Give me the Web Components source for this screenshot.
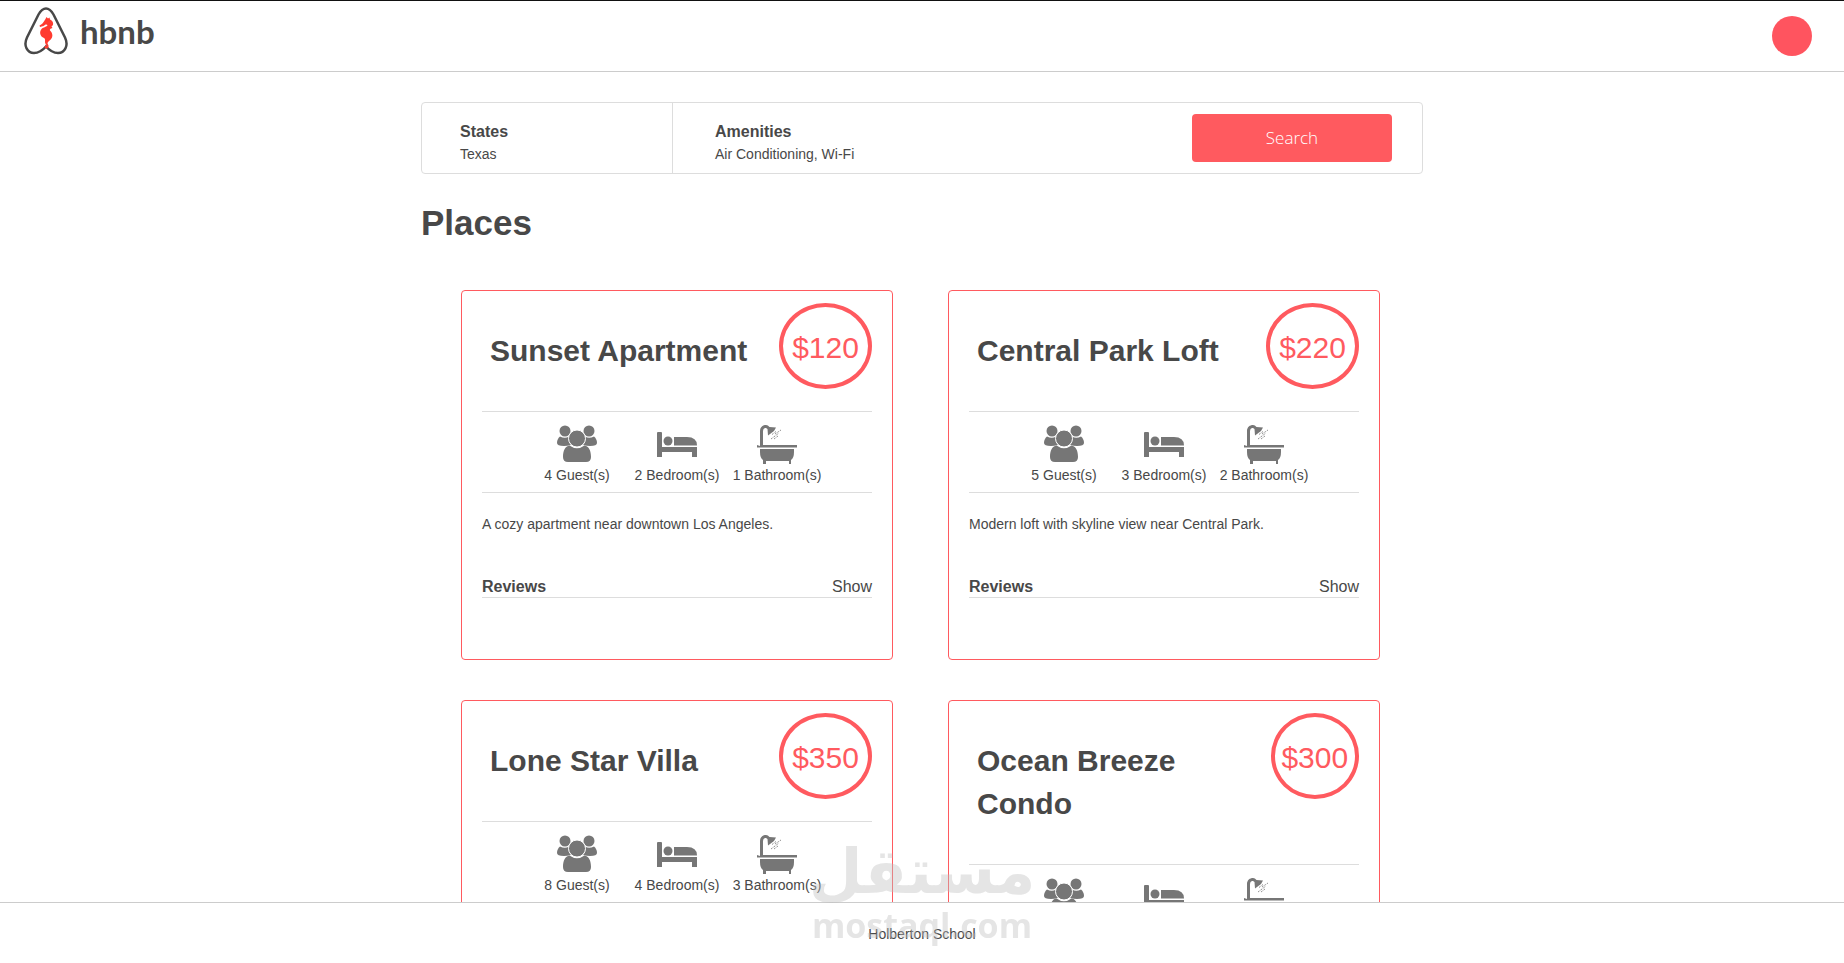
<!DOCTYPE html>
<html lang="en">
<head>
  <meta charset="UTF-8">
  <meta name="viewport" content="width=device-width, initial-scale=1">
  <title>AirBnB clone</title>
  <style>
    body {
      margin: 0;
      color: #484848;
      background: #fff;
      font-family: "Liberation Sans", Helvetica, Arial, sans-serif;
      font-size: 14px;
    }
  </style>
</head>
<body>
  <hbnb-app>
    <hbnb-header slot="header"></hbnb-header>
    <hbnb-filters>
      <hbnb-filter label="States">Texas</hbnb-filter>
      <hbnb-filter label="Amenities">Air Conditioning, Wi-Fi</hbnb-filter>
    </hbnb-filters>
    <hbnb-places>
      <hbnb-place name="Sunset Apartment" price="120" guests="4" bedrooms="2" bathrooms="1">A cozy apartment near downtown Los Angeles.</hbnb-place>
      <hbnb-place name="Central Park Loft" price="220" guests="5" bedrooms="3" bathrooms="2">Modern loft with skyline view near Central Park.</hbnb-place>
      <hbnb-place name="Lone Star Villa" price="350" guests="8" bedrooms="4" bathrooms="3"></hbnb-place>
      <hbnb-place name="Ocean Breeze Condo" price="300"></hbnb-place>
    </hbnb-places>
    <hbnb-footer slot="footer">Holberton School</hbnb-footer>
    <hbnb-watermark slot="footer"></hbnb-watermark>
  </hbnb-app>

  <script>
    // Page shell: fixed bars above and below, places scroll in between
    class HbnbApp extends HTMLElement {
      constructor() {
        super();
        this.attachShadow({ mode: 'open' });
      }

      connectedCallback() {
        this.shadowRoot.innerHTML = `
          <style>
            :host {
              display: flex;
              flex-direction: column;
              height: 100vh;
              box-sizing: border-box;
              border-top: 1px solid #111;
            }
            main {
              flex: 1;
              min-height: 0;
              overflow-y: auto;
              scrollbar-width: none;
            }
            .container {
              max-width: 1002px;
              margin: 30px auto;
            }
          </style>
          <slot name="header"></slot>
          <main><div class="container"><slot></slot></div></main>
          <slot name="footer"></slot>
        `;
      }
    }

    class HbnbHeader extends HTMLElement {
      constructor() {
        super();
        this.attachShadow({ mode: 'open' });
      }

      connectedCallback() {
        this.shadowRoot.innerHTML = `
          <style>
            :host { display: block; }
            header {
              display: flex;
              align-items: center;
              justify-content: space-between;
              height: 70px;
              padding: 0 32px 0 24px;
              border-bottom: 1px solid #ccc;
            }
            a {
              display: flex;
              align-items: center;
              gap: 12px;
              padding-bottom: 10px;
              color: #484848;
              font: bold 33px/48px Lato, sans-serif;
              text-decoration: none;
            }
            svg { display: block; }
            button {
              width: 40px;
              height: 40px;
              padding: 0;
              border: 0;
              border-radius: 50%;
              background: #ff545f;
            }
          </style>
          <header>
            <a href="#">
              <svg width="44" height="48" viewBox="0 0 44 48" aria-hidden="true">
                <path d="M22 1.500C25.500 1.500 27.500 4 29.500 7.500L41 30.500C45 39 40.500 46 34 46C29 46 25.500 43.500 22 39.500C18.500 43.500 15 46 10 46C3.500 46 -1 39 3 30.500L14.500 7.500C16.500 4 18.500 1.500 22 1.500Z" fill="none" stroke="#484848" stroke-width="2.500"/>
                <path d="M21.500 12L22.500 10L24 11.500L25.500 10.500L26 12.500C28.500 13.500 29.500 15.500 29 18L27.500 19.500L28.500 21C26.500 21.500 25 22.500 26.500 24C28 25.500 29 28 28 30.500C27 33 24 34 23.500 36C23.500 37.500 25 38 24.500 40C24 42 21 42 20.500 40C20.500 38.500 22 38.500 22.500 39.500C23.500 38 21 37.500 21 35C21 33 21.500 32 20 31C16 29.500 15 25 17.500 22C19.500 20 23 20 23.500 18C22.500 17 21 17.500 19.500 19L16 20L15.500 18.500C18 17.500 19.500 15.500 21.500 12Z" fill="#ff3a2f"/>
              </svg>
              <span>hbnb</span>
            </a>
            <button type="button" aria-label="Account"></button>
          </header>
        `;
      }
    }

    class HbnbFilters extends HTMLElement {
      constructor() {
        super();
        this.attachShadow({ mode: 'open' });
      }

      connectedCallback() {
        this.shadowRoot.innerHTML = `
          <style>
            :host { display: block; }
            section {
              display: flex;
              align-items: center;
              height: 70px;
              border: 1px solid #ddd;
              border-radius: 4px;
            }
            button {
              width: 200px;
              height: 48px;
              margin: 0 30px 0 auto;
              padding: 0 0 2px;
              border: 0;
              border-radius: 4px;
              color: #fff;
              background: #ff5a5f;
              font: 300 17px "Open Sans", sans-serif;
            }
            button:hover { opacity: 0.9; }
          </style>
          <section>
            <slot></slot>
            <button type="button">Search</button>
          </section>
        `;
      }
    }

    class HbnbFilter extends HTMLElement {
      constructor() {
        super();
        this.attachShadow({ mode: 'open' });
      }

      connectedCallback() {
        this.shadowRoot.innerHTML = `
          <style>
            :host {
              display: block;
              box-sizing: border-box;
              min-width: 251px;
              height: 70px;
              padding: 18px 38px 0;
            }
            :host(:not(:last-of-type)) { border-right: 1px solid #ddd; }
            :host(:last-of-type) { padding-left: 42px; }
            h3, h4 { margin: 0; }
            h3 { font-size: 16px; line-height: 22px; }
            h4 { font-size: 14px; font-weight: normal; line-height: 22px; }
          </style>
          <h3>${this.getAttribute('label')}</h3>
          <h4><slot></slot></h4>
        `;
      }
    }

    class HbnbPlaces extends HTMLElement {
      constructor() {
        super();
        this.attachShadow({ mode: 'open' });
      }

      connectedCallback() {
        this.shadowRoot.innerHTML = `
          <style>
            :host { display: block; }
            h1 {
              margin: 28px 0 46px;
              font-size: 35px;
              line-height: 42px;
            }
            section {
              display: grid;
              grid-template-columns: repeat(auto-fill, 432px);
              align-items: start;
              gap: 40px 55px;
              padding: 0 40px;
            }
          </style>
          <h1>Places</h1>
          <section><slot></slot></section>
        `;
      }
    }

    const ICONS = {
      guest: `
        <g fill="#767676">
          <circle cx="8" cy="7" r="5.500"/><circle cx="32" cy="7" r="5.500"/>
          <path d="M3 12.500Q8 15 12 12.500Q11 18 14 21Q10 22 7 22Q0 22 0 19Q0 15 3 12.500Z"/>
          <path d="M37 12.500Q32 15 28 12.500Q29 18 26 21Q30 22 33 22Q40 22 40 19Q40 15 37 12.500Z"/>
          <circle cx="20" cy="14.500" r="8.500" stroke="#fff"/>
          <path d="M12.500 21.500Q20 27 27.500 21.500C32 22 34 27 34 33Q34 38 29 38H11Q6 38 6 33C6 27 8 22 12.500 21.500Z"/>
        </g>`,
      bed: `
        <g fill="#767676">
          <path d="M0 9Q0 8 1 8H4Q5 8 5 9V23H40V33H35V28H5V33H0Z"/>
          <circle cx="11" cy="17" r="4.500"/>
          <path d="M17 21.500V13H30Q40 13 40 21.500Z"/>
        </g>`,
      bath: `
        <g fill="#767676">
          <path d="M3 22V7C3 3 6 1 9 1Q11 1 12.500 3L19 3.500L17 7L11 11.500L10.500 5Q9 3.500 8 4Q6 4.500 6 7V21H40V23.500H0V21Z"/>
          <path d="M3 25H37V28Q37 34 34 36V40H32V37H9V40H6V36Q3 34 3 28Z"/>
          <path d="M15 10.500L19 7.500M18 10L24 6M14 15L22 9M17 15L21 12" stroke="#767676" stroke-dasharray="1 1"/>
        </g>`
    };

    class HbnbPlace extends HTMLElement {
      constructor() {
        super();
        this.attachShadow({ mode: 'open' });
      }

      // One icon with its caption
      info(icon, count, label) {
        return `
          <li>
            <svg width="40" height="40" viewBox="0 0 40 40" aria-hidden="true">${ICONS[icon]}</svg>
            ${count} ${label}(s)
          </li>`;
      }

      connectedCallback() {
        const name = this.getAttribute('name');
        const price = this.getAttribute('price');
        const guests = this.getAttribute('guests') || '6';
        const bedrooms = this.getAttribute('bedrooms') || '3';
        const bathrooms = this.getAttribute('bathrooms') || '2';

        this.shadowRoot.innerHTML = `
          <style>
            :host { display: block; }
            article {
              box-sizing: border-box;
              min-height: 370px;
              padding: 12px 20px 20px;
              border: 1px solid #ff5a5f;
              border-radius: 4px;
            }
            .headline {
              display: flex;
              justify-content: space-between;
              align-items: flex-start;
            }
            h2 {
              margin: 26px 0 39px;
              padding: 0 8px;
              font-size: 30px;
              line-height: 43px;
            }
            .price {
              width: 85px;
              height: 78px;
              border: 4px solid #ff5a5f;
              border-radius: 50%;
              color: #ff5a5f;
              font-size: 30px;
              line-height: 82px;
              text-align: center;
            }
            ul {
              display: flex;
              justify-content: center;
              height: 80px;
              margin: 0;
              padding: 0;
              border: solid #ddd;
              border-width: 1px 0;
              list-style: none;
            }
            li {
              width: 100px;
              padding-top: 12px;
              line-height: 22px;
              text-align: center;
              white-space: nowrap;
            }
            svg {
              display: block;
              margin: 0 auto;
            }
            p {
              min-height: 20px;
              margin: 21px 0 43px;
              line-height: 20px;
            }
            .reviews {
              display: flex;
              justify-content: space-between;
              border-bottom: 1px solid #ddd;
              font-size: 16px;
              line-height: 20px;
            }
            h3 { margin: 0; font-size: 16px; }
            button {
              padding: 0;
              border: 0;
              color: inherit;
              background: none;
              font: inherit;
            }
          </style>
          <article>
            <div class="headline">
              <h2>${name}</h2>
              <div class="price">$${price}</div>
            </div>
            <ul>
              ${this.info('guest', guests, 'Guest')}
              ${this.info('bed', bedrooms, 'Bedroom')}
              ${this.info('bath', bathrooms, 'Bathroom')}
            </ul>
            <p><slot></slot></p>
            <div class="reviews">
              <h3>Reviews</h3>
              <button type="button">Show</button>
            </div>
          </article>
        `;
      }
    }

    class HbnbFooter extends HTMLElement {
      constructor() {
        super();
        this.attachShadow({ mode: 'open' });
      }

      connectedCallback() {
        this.shadowRoot.innerHTML = `
          <style>
            :host { display: block; }
            footer {
              height: 60px;
              border-top: 1px solid #ccc;
              line-height: 62px;
              text-align: center;
            }
          </style>
          <footer><slot></slot></footer>
        `;
      }
    }

    // Translucent mark that lies over the bottom of the page
    class HbnbWatermark extends HTMLElement {
      constructor() {
        super();
        this.attachShadow({ mode: 'open' });
      }

      connectedCallback() {
        this.shadowRoot.innerHTML = `
          <style>
            :host {
              position: fixed;
              bottom: 16px;
              left: 50%;
              transform: translateX(-50%);
              display: flex;
              flex-direction: column;
              align-items: center;
              color: #bebebe;
              opacity: 0.4;
              font-weight: bold;
              pointer-events: none;
              white-space: nowrap;
            }
            .arabic {
              font-family: "DejaVu Sans", sans-serif;
              font-size: 62px;
              line-height: 62px;
            }
            .latin {
              font-family: "Open Sans", sans-serif;
              font-size: 34px;
              line-height: 44px;
            }
          </style>
          <span class="arabic" lang="ar" dir="rtl">مستقل</span>
          <span class="latin">mostaql.com</span>
        `;
      }
    }

    customElements.define('hbnb-app', HbnbApp);
    customElements.define('hbnb-header', HbnbHeader);
    customElements.define('hbnb-filters', HbnbFilters);
    customElements.define('hbnb-filter', HbnbFilter);
    customElements.define('hbnb-places', HbnbPlaces);
    customElements.define('hbnb-place', HbnbPlace);
    customElements.define('hbnb-footer', HbnbFooter);
    customElements.define('hbnb-watermark', HbnbWatermark);
  </script>
</body>
</html>
